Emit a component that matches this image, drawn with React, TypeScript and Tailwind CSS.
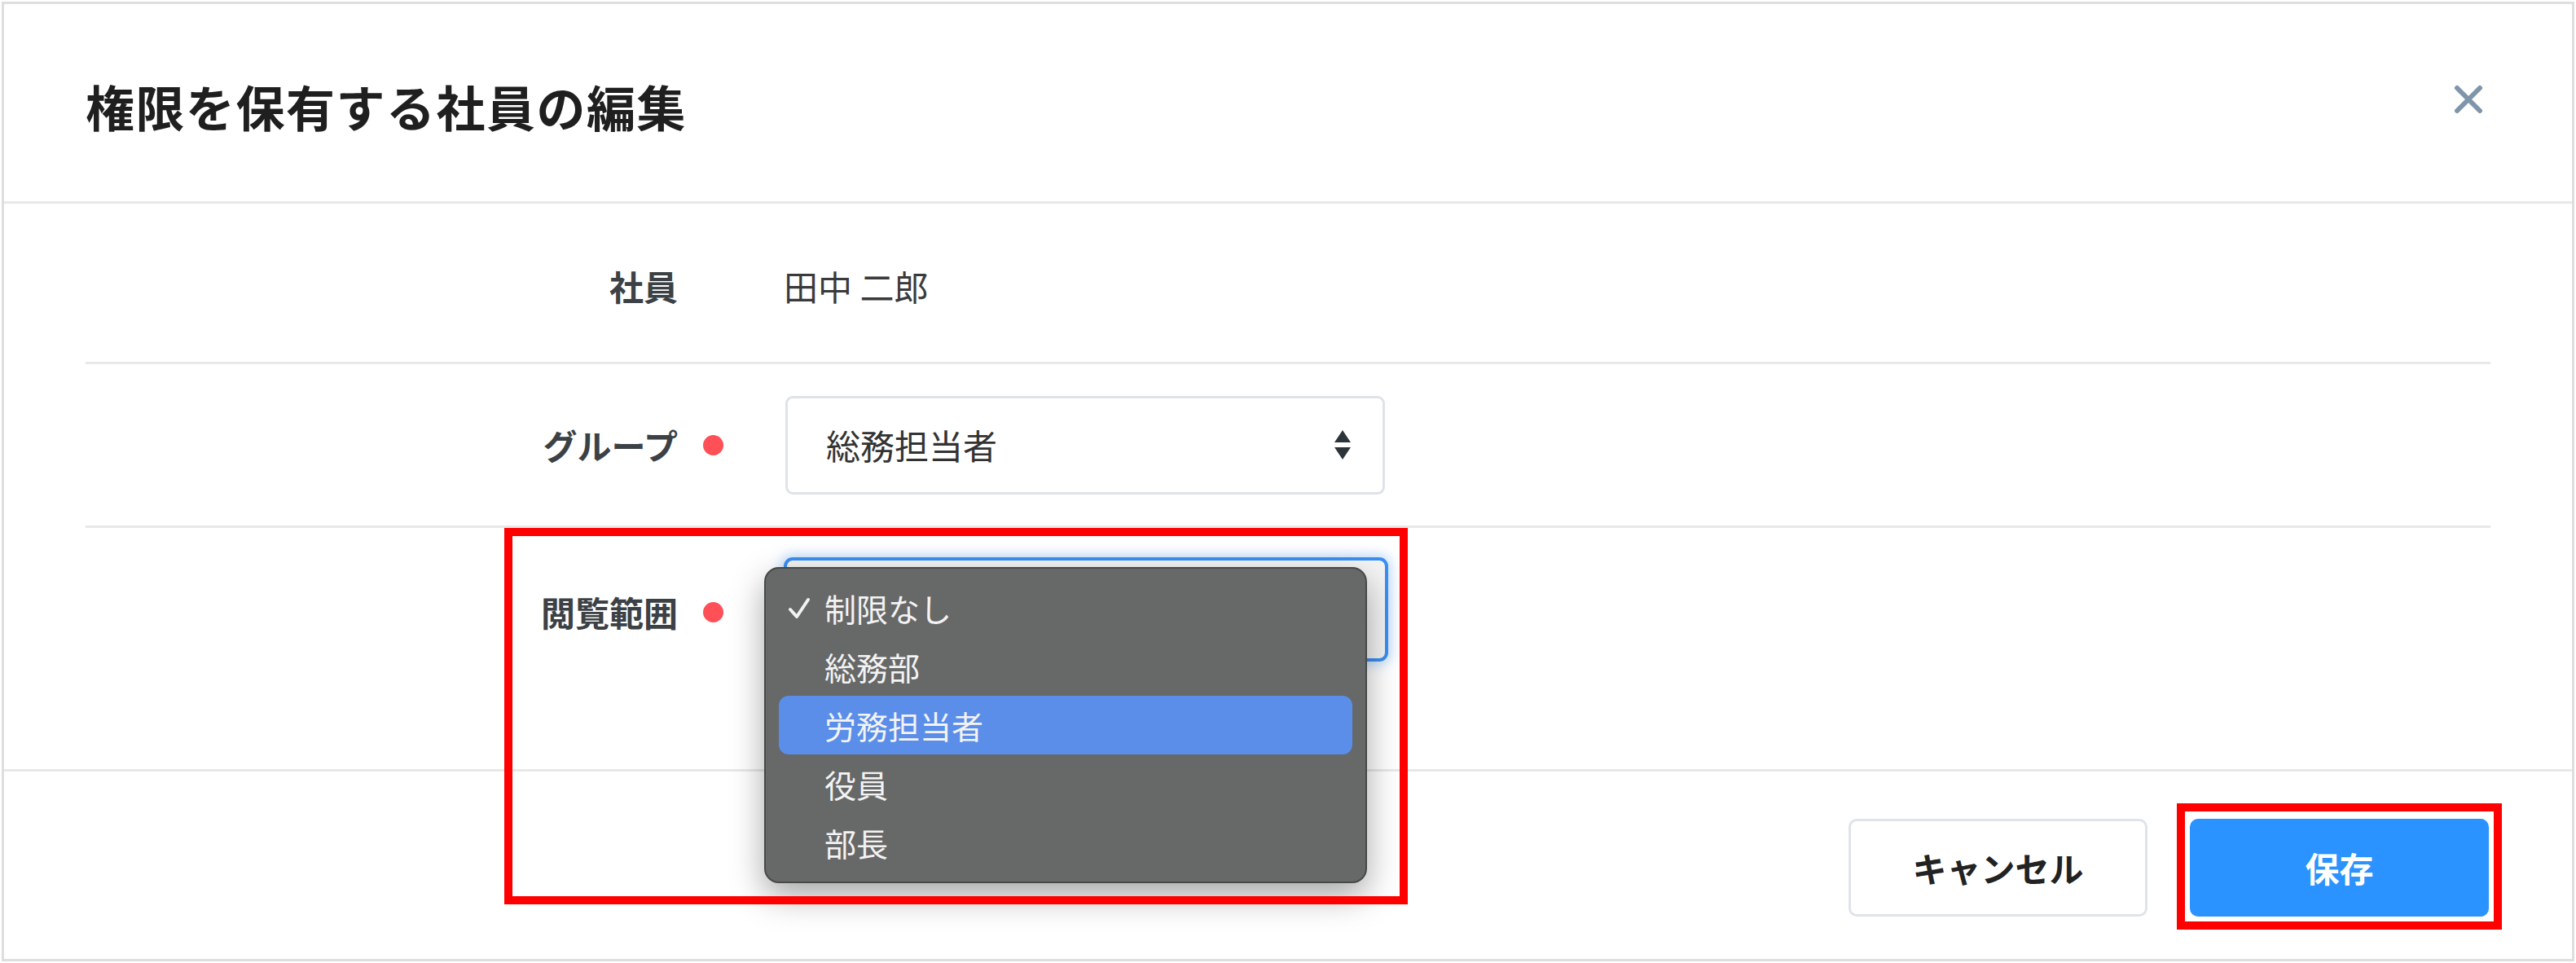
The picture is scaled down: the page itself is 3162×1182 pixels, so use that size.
import React from "react";

const options = ["制限なし", "総務部", "労務担当者", "役員", "部長"];

const RequiredDot = ({ hidden }: { hidden?: boolean }) => (
  <span
    className={`inline-block size-[25px] shrink-0 rounded-full ${hidden ? "bg-transparent" : "bg-[#ff4f57]"}`}
  />
);

const SelectArrows = () => (
  <svg width="20" height="36" viewBox="0 0 20 36" className="shrink-0">
    <polygon points="10,0 20,15 0,15" fill="#2d3439" />
    <polygon points="0,21 20,21 10,36" fill="#2d3439" />
  </svg>
);

const Label = ({ text, required }: { text: string; required?: boolean }) => (
  <div className="flex w-[783px] shrink-0 items-center justify-end gap-[31px]">
    <span className="text-[42px] leading-none font-bold text-[#3c4145]">{text}</span>
    <RequiredDot hidden={!required} />
  </div>
);

const App = () => {
  return (
    <div className="relative h-[1182px] w-[3162px] bg-white p-[2px] font-['Noto_Sans_CJK_JP','Noto_Sans',sans-serif]">
      <div className="flex h-full flex-col border-[3px] border-[#dedede]">
        {/* header */}
        <div className="flex h-[245px] shrink-0 items-center justify-between border-b-[3px] border-[#e8e8e8] pt-[8px] pr-[109px] pl-[100px]">
          <h1 className="text-[60px] leading-none font-bold tracking-[1.5px] text-[#1f1f1f]">
            権限を保有する社員の編集
          </h1>
          <svg width="36" height="36" viewBox="0 0 36 36" className="-mt-[16px]">
            <path d="M4 4 L32 32 M32 4 L4 32" stroke="#7f95aa" strokeWidth="6" strokeLinecap="round" />
          </svg>
        </div>

        {/* body */}
        <div className="flex flex-1 flex-col px-[100px]">
          <div className="flex h-[197px] items-center border-b-[3px] border-[#e8e8e8] pt-[8px]">
            <Label text="社員" />
            <span className="ml-[74px] text-[42px] leading-none text-[#3a3a3a]">田中 二郎</span>
          </div>

          <div className="flex h-[201px] items-center border-b-[3px] border-[#e8e8e8]">
            <Label text="グループ" required />
            <div className="ml-[76px] flex h-[121px] w-[736px] items-center justify-between rounded-[9px] border-[3px] border-[#dfe3e8] bg-white pr-[39px] pl-[47px]">
              <span className="text-[42px] leading-none text-[#333333]">総務担当者</span>
              <SelectArrows />
            </div>
          </div>

          <div className="flex items-start pt-[36px]">
            <div className="flex h-[128px] items-center pt-[6px]">
              <Label text="閲覧範囲" required />
            </div>
            <div className="relative ml-[74px] h-[128px] w-[742px] rounded-[11px] border-[4px] border-[#3b8ff0] bg-[#f4f4f4] shadow-[0_0_14px_4px_rgba(90,160,245,0.35)]">
              <div className="absolute top-[8px] -left-[28px] z-10 w-[740px] rounded-[18px] border-[2px] border-[#474848] bg-[#676868] py-[12px] shadow-[0_16px_40px_rgba(0,0,0,0.35)]">
                {options.map((opt, i) => (
                  <div
                    key={opt}
                    className={`relative mx-[16px] flex h-[72px] items-center rounded-[12px] pl-[56px] ${i === 2 ? "bg-[#5a8ee9]" : ""}`}
                  >
                    {i === 0 && (
                      <svg width="28" height="27" viewBox="0 0 28 27" className="absolute top-[23px] left-[11px]">
                        <path d="M3 15 L11 24 L25 3" stroke="#f2f2f2" strokeWidth="4" fill="none" strokeLinecap="round" strokeLinejoin="round" />
                      </svg>
                    )}
                    <span className="text-[39px] leading-none text-[#f3f3f3]">{opt}</span>
                  </div>
                ))}
              </div>
            </div>
          </div>
        </div>

        {/* footer */}
        <div className="flex h-[233px] shrink-0 items-center justify-end gap-[52px] border-t-[3px] border-[#e8e8e8] pt-[6px] pr-[102px]">
          <button className="flex h-[120px] w-[367px] items-center justify-center rounded-[10px] border-[3px] border-[#dfe4ea] bg-white text-[42px] leading-none font-bold text-[#222222]">
            キャンセル
          </button>
          <div className="relative">
            <button className="flex h-[120px] w-[367px] items-center justify-center rounded-[10px] bg-[#2a93ff] text-[42px] leading-none font-bold text-white">
              保存
            </button>
            <div className="pointer-events-none absolute -top-[19px] -right-[16px] -bottom-[16px] -left-[16px] border-[10px] border-[#ff0000]" />
          </div>
        </div>
      </div>

      {/* annotation */}
      <div className="pointer-events-none absolute top-[648px] left-[619px] z-20 h-[462px] w-[1109px] border-[10px] border-[#ff0000]" />
    </div>
  );
};

export default App;
